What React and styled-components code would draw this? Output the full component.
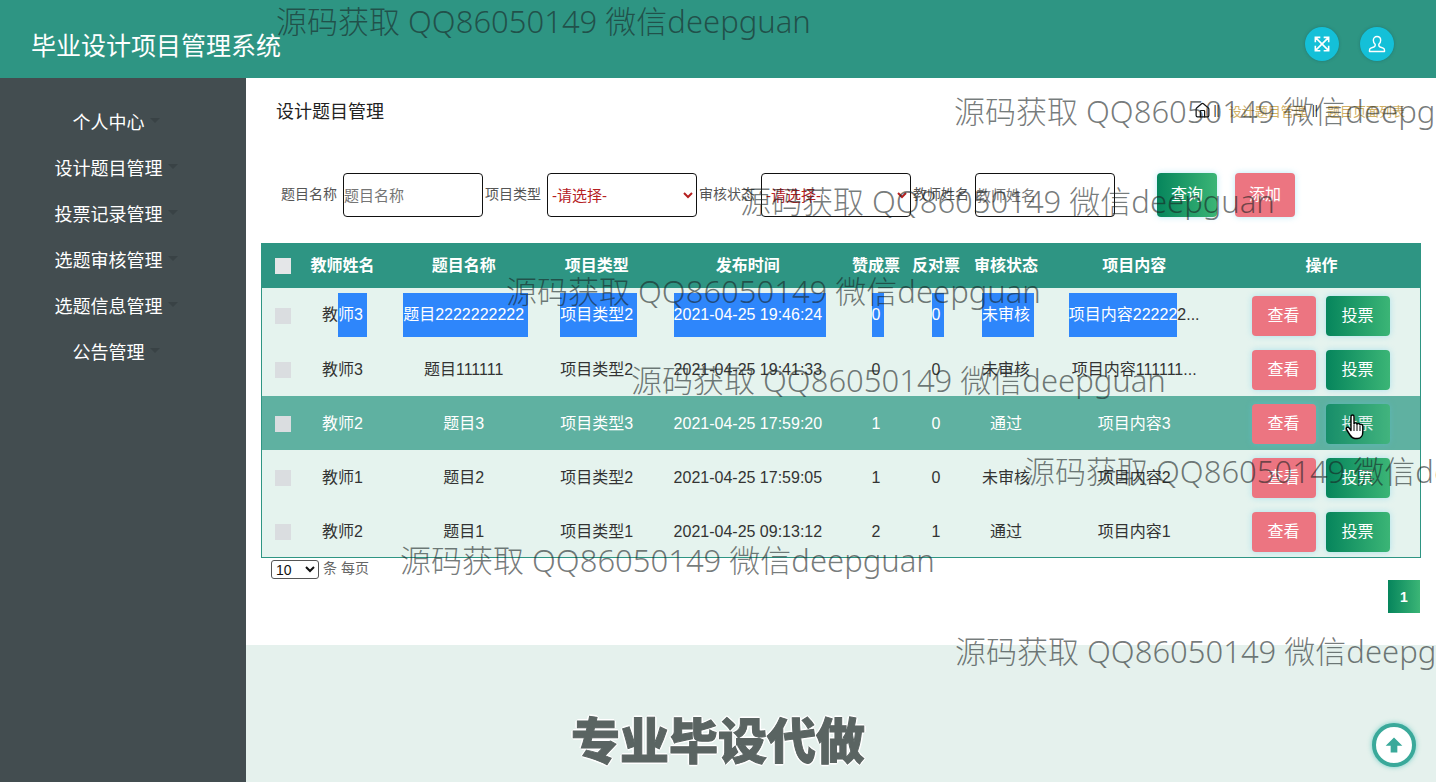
import React from 'react';
import styled, { createGlobalStyle } from 'styled-components';
import { Home } from 'lucide-react';

const FONT = '"Liberation Sans", "Noto Sans CJK SC", sans-serif';

const GlobalStyle = createGlobalStyle`
  html, body { margin: 0; padding: 0; height: 100%; overflow: hidden; }
  body { font-family: ${FONT}; background: #fff; }
  * { box-sizing: border-box; }
`;

const Page = styled.div`
  position: relative;
  width: 1436px;
  height: 782px;
  overflow: hidden;
`;

const Header = styled.header`
  height: 78px;
  background: #2e9583;
  display: flex;
  align-items: center;
  justify-content: space-between;
  padding: 10px 42px 0 31px;
`;

const Title = styled.h1`
  margin: 3px 0 0;
  font-size: 25px;
  line-height: 32px;
  font-weight: 400;
  color: #fff;
  white-space: nowrap;
`;

const HeadTools = styled.div`
  display: flex;
  gap: 21px;
`;

const RoundTool = styled.button`
  width: 34px;
  height: 34px;
  padding: 0;
  border: none;
  border-radius: 50%;
  background: #14c0d8;
  color: #fff;
  display: flex;
  align-items: center;
  justify-content: center;
  box-shadow: 0 0 3px rgba(20, 90, 100, 0.5);
`;

const Body = styled.div`
  display: flex;
  height: 704px;
`;

const Sidebar = styled.nav`
  width: 246px;
  flex: none;
  background: #434d50;
  padding: 20px 14px 0 0;
`;

const NavItem = styled.div`
  height: 46px;
  display: flex;
  align-items: center;
  justify-content: center;
  font-size: 18px;
  color: #fff;
`;

const Caret = styled.i`
  width: 0;
  height: 0;
  margin: 0 0 1px 5px;
  border-style: solid;
  border-width: 5px 5px 0;
  border-color: #394245 transparent transparent;
`;

const Main = styled.main`
  flex: 1;
  min-width: 0;
  display: flex;
  flex-direction: column;
`;

const Content = styled.section`
  height: 567px;
  padding: 0 15px;
  background: #fff;
`;

const Crumbs = styled.div`
  height: 66px;
  display: flex;
  align-items: center;
  padding: 0 16px 2px 15px;
`;

const CrumbTitle = styled.div`
  flex: 1;
  font-size: 18px;
  line-height: 24px;
  margin-top: 4px;
  color: #222;
`;

const CrumbSep = styled.span`
  margin: 0 9px 0 5px;
  font-size: 12px;
  color: #222;
`;

const CrumbHome = styled(Home)`
  margin-right: 2px;
  transform: translateX(4px);
`;

const CrumbLink = styled.span`
  font-size: 13px;
  color: #cfae62;
`;

const Filters = styled.form`
  display: flex;
  align-items: center;
  height: 44px;
  margin-top: 29px;
  padding-left: 20px;
`;

const FilterLabel = styled.label`
  width: 56px;
  margin-right: 6px;
  font-size: 14px;
  line-height: 20px;
  margin-top: -3px;
  white-space: nowrap;
  color: #555;
`;

const TextField = styled.input`
  width: 140px;
  height: 44px;
  margin-right: 2px;
  padding: 0;
  border: 1px solid #111;
  border-radius: 4px;
  background: #fff;
  font: 15px ${FONT};
`;

const SelectField = styled.select`
  width: 150px;
  height: 44px;
  margin-right: 2px;
  border: 1px solid #111;
  border-radius: 4px;
  background: #fff;
  color: #b5201f;
  font: 15px ${FONT};
`;

const Btn = styled.button`
  width: ${(p) => p.$w}px;
  height: ${(p) => p.$h}px;
  padding: 0;
  border: none;
  border-radius: 4px;
  color: #fff;
  font: 16px/20px ${FONT};
  background: ${(p) => (p.$tone === 'red' ? '#ec7581' : 'linear-gradient(90deg, #06855c, #3bb576)')};
  box-shadow: 0 0 6px rgba(90, 200, 235, 0.4);
`;

const SearchBtn = styled(Btn)`
  margin-left: 40px;
`;

const AddBtn = styled(Btn)`
  margin-left: 18px;
`;

const Table = styled.table`
  width: 1160px;
  margin-top: 26px;
  table-layout: fixed;
  border-collapse: collapse;
  border: 1px solid #2e9583;
  font-size: 16px;
  line-height: 20px;
`;

const HeadRow = styled.tr`
  height: 44px;
  background: #2e9583;
  color: #fff;
`;

const Th = styled.th`
  padding: 0;
  font-weight: 700;
  text-align: center;
  white-space: nowrap;
`;

const Row = styled.tr`
  height: 54px;
  background: ${(p) => (p.$hover ? '#5fb1a1' : '#e5f3ee')};
  color: ${(p) => (p.$hover ? '#fff' : '#333')};
`;

const Td = styled.td`
  padding: 3px 0 0;
  text-align: center;
  white-space: nowrap;
`;

const Check = styled.input.attrs({ type: 'checkbox' })`
  display: block;
  width: 16px;
  height: 16px;
  margin: 0 0 0 13px;
  appearance: none;
  background: ${(p) => (p.$light ? '#e4e6e8' : '#dadde0')};
`;

const Selected = styled.span`
  display: inline-block;
  height: 44px;
  line-height: 44px;
  margin-bottom: 2px;
  padding-right: ${(p) => (p.$flush ? 0 : 4)}px;
  margin-right: ${(p) => (p.$flush ? 0 : -4)}px;
  background: #2e86fb;
  color: #fff;
  vertical-align: middle;
`;

const Actions = styled.div`
  display: flex;
  justify-content: center;
  gap: 10px;
  padding-right: 2px;
`;

const VoteBtn = styled(Btn)`
  opacity: ${(p) => (p.$hover ? 0.8 : 1)};
`;

const PageSize = styled.div`
  display: flex;
  align-items: center;
  height: 20px;
  margin-top: 1px;
  padding-left: 10px;
  font-size: 14px;
  color: #666;
`;

const SizeSelect = styled.select`
  width: 48px;
  height: 19px;
  margin-right: 4px;
  padding: 0;
  border: 1px solid #555;
  border-radius: 3px;
  background: #fff;
  font: 14px ${FONT};
  color: #111;
`;

const SizeNote = styled.span`
  line-height: 20px;
  margin-top: -3px;
`;

const Pager = styled.div`
  display: flex;
  justify-content: flex-end;
  margin-top: 1px;
  padding-right: 1px;
`;

const PageNum = styled.span`
  width: 32px;
  height: 33px;
  display: flex;
  align-items: center;
  justify-content: center;
  font-size: 14px;
  font-weight: 700;
  color: #fff;
  background: linear-gradient(90deg, #06855c, #3bb576);
`;

const Band = styled.div`
  flex: 1;
  background: #e5f1ed;
`;

const Promo = styled.div`
  position: absolute;
  left: 571px;
  top: 712px;
  font-size: 49px;
  line-height: 60px;
  font-weight: 900;
  white-space: nowrap;
  color: #5a6462;
  -webkit-text-stroke: 1px #5a6462;
  text-shadow: 1px 1px 0 #fff, -1px -1px 0 #fff, 1px -1px 0 #fff, -1px 1px 0 #fff, 2px 0 0 #fff, -2px 0 0 #fff, 0 2px 0 #fff, 0 -2px 0 #fff;
`;

const Watermark = styled.div`
  position: absolute;
  left: ${(p) => p.$x}px;
  top: ${(p) => p.$y - 22}px;
  font: 300 31px/44px "Noto Sans", "Noto Sans CJK SC", sans-serif;
  white-space: nowrap;
  color: rgba(25, 35, 35, 0.6);
  pointer-events: none;
`;

const BackTop = styled.button`
  position: absolute;
  left: 1372px;
  top: 723px;
  width: 44px;
  height: 44px;
  padding: 0;
  border: 4px solid #3aa99a;
  border-radius: 50%;
  background: #fff;
  display: flex;
  align-items: center;
  justify-content: center;
  box-shadow: 0 0 5px rgba(60, 190, 180, 0.7);
`;

const HandCursor = styled.svg`
  position: absolute;
  left: 1345px;
  top: 414px;
  width: 20px;
  height: 26px;
`;

const WATERMARKS = [
  [276, 21], [954, 111], [740, 201], [506, 291],
  [631, 380], [1024, 471], [400, 560], [955, 651],
];

const NAV = ['个人中心', '设计题目管理', '投票记录管理', '选题审核管理', '选题信息管理', '公告管理'];

const WIDTHS = [41, 80, 162, 104, 198, 58, 62, 78, 178, 197];
const HEADS = ['教师姓名', '题目名称', '项目类型', '发布时间', '赞成票', '反对票', '审核状态', '项目内容', '操作'];

const ROWS = [
  ['教师3', '题目111111', '项目类型2', '2021-04-25 19:41:33', '0', '0', '未审核', '项目内容111111...'],
  ['教师2', '题目3', '项目类型3', '2021-04-25 17:59:20', '1', '0', '通过', '项目内容3'],
  ['教师1', '题目2', '项目类型2', '2021-04-25 17:59:05', '1', '0', '未审核', '项目内容2'],
  ['教师2', '题目1', '项目类型1', '2021-04-25 09:13:12', '2', '1', '通过', '项目内容1'],
];

function RowActions({ hover }) {
  return (
    <Actions>
      <Btn type="button" $w={64} $h={40} $tone="red">查看</Btn>
      <VoteBtn type="button" $w={64} $h={40} $hover={hover}>投票</VoteBtn>
    </Actions>
  );
}

export default function App() {
  return (
    <Page>
      <GlobalStyle />
      <Header>
        <Title>毕业设计项目管理系统</Title>
        <HeadTools>
          <RoundTool type="button">
            <svg width="20" height="20" viewBox="0 0 24 24" fill="none" stroke="currentColor" strokeWidth="1.9">
              <path d="M4 4l16 16M20 4L4 20M4 10V4h6M14 4h6v6M4 14v6h6M14 20h6v-6" />
            </svg>
          </RoundTool>
          <RoundTool type="button">
            <svg width="20" height="20" viewBox="0 0 24 24" fill="none" stroke="currentColor" strokeWidth="1.7" strokeLinejoin="round">
              <path d="M12 3c-2.8 0-4.4 2-4.4 4.6 0 2 .9 3.7 2.2 4.8v1.5c0 .9-.7 1.3-1.6 1.7L4.6 17c-1.2.6-1.6 1.4-1.6 2.5V21h18v-1.5c0-1.1-.4-1.9-1.6-2.5l-3.6-1.4c-.9-.4-1.6-.8-1.6-1.7v-1.5c1.3-1.1 2.2-2.8 2.2-4.8C16.400 5 14.800 3 12 3z" />
            </svg>
          </RoundTool>
        </HeadTools>
      </Header>
      <Body>
        <Sidebar>
          {NAV.map((name) => (
            <NavItem key={name}>{name}<Caret /></NavItem>
          ))}
        </Sidebar>
        <Main>
          <Content>
            <Crumbs>
              <CrumbTitle>设计题目管理</CrumbTitle>
              <CrumbHome size={17} color="#111" strokeWidth={1.7} />
              <CrumbSep>||</CrumbSep>
              <CrumbLink>设计题目管理</CrumbLink>
              <CrumbSep>||</CrumbSep>
              <CrumbLink>题目页面列表</CrumbLink>
            </Crumbs>
            <Filters>
              <FilterLabel>题目名称</FilterLabel>
              <TextField placeholder="题目名称" />
              <FilterLabel>项目类型</FilterLabel>
              <SelectField><option>-请选择-</option></SelectField>
              <FilterLabel>审核状态</FilterLabel>
              <SelectField><option>-请选择-</option></SelectField>
              <FilterLabel>教师姓名</FilterLabel>
              <TextField placeholder="教师姓名" />
              <SearchBtn type="button" $w={60} $h={44}>查询</SearchBtn>
              <AddBtn type="button" $w={60} $h={44} $tone="red">添加</AddBtn>
            </Filters>
            <Table>
              <colgroup>
                {WIDTHS.map((w, i) => <col key={i} width={w} />)}
              </colgroup>
              <thead>
                <HeadRow>
                  <Th><Check $light /></Th>
                  {HEADS.map((h) => <Th key={h}>{h}</Th>)}
                </HeadRow>
              </thead>
              <tbody>
                <Row>
                  <Td><Check /></Td>
                  <Td>教<Selected>师3</Selected></Td>
                  <Td><Selected>题目2222222222</Selected></Td>
                  <Td><Selected>项目类型2</Selected></Td>
                  <Td><Selected>2021-04-25 19:46:24</Selected></Td>
                  <Td><Selected>0</Selected></Td>
                  <Td><Selected>0</Selected></Td>
                  <Td><Selected>未审核</Selected></Td>
                  <Td><Selected $flush>项目内容22222</Selected>2...</Td>
                  <Td><RowActions /></Td>
                </Row>
                {ROWS.map((cells, r) => (
                  <Row key={r} $hover={r === 1}>
                    <Td><Check /></Td>
                    {cells.map((c, i) => <Td key={i}>{c}</Td>)}
                    <Td><RowActions hover={r === 1} /></Td>
                  </Row>
                ))}
              </tbody>
            </Table>
            <PageSize>
              <SizeSelect><option>10</option></SizeSelect>
              <SizeNote>条 每页</SizeNote>
            </PageSize>
            <Pager><PageNum>1</PageNum></Pager>
          </Content>
          <Band />
        </Main>
      </Body>
      {WATERMARKS.map(([x, y]) => (
        <Watermark key={x} $x={x} $y={y}>源码获取 QQ86050149 微信deepguan</Watermark>
      ))}
      <Promo>专业毕设代做</Promo>
      <BackTop type="button">
        <svg width="20" height="20" viewBox="0 0 24 24" fill="#3aa99a">
          <path d="M12 3 L22 13 H16 V21 H8 V13 H2 Z" />
        </svg>
      </BackTop>
      <HandCursor viewBox="0 0 20 26">
        <path d="M6 2.500c0-2 3-2 3 0V10c.4-1.500 3-1.500 3 .4 .4-1.400 3-1.200 3 .6 .5-1 2.800-.8 2.800 1V18c0 3.500-2 6.500-5.500 6.500H10c-2.500 0-3.500-1.200-5-3.500L1.500 15.500c-1-1.800 1.300-3.200 2.600-1.600L6 16.500z" fill="#fff" stroke="#000" strokeWidth="1.400" strokeLinejoin="round" />
        <path d="M9 11v6M12 11v6M15 12v5" stroke="#000" strokeWidth="1" fill="none" />
      </HandCursor>
    </Page>
  );
}
